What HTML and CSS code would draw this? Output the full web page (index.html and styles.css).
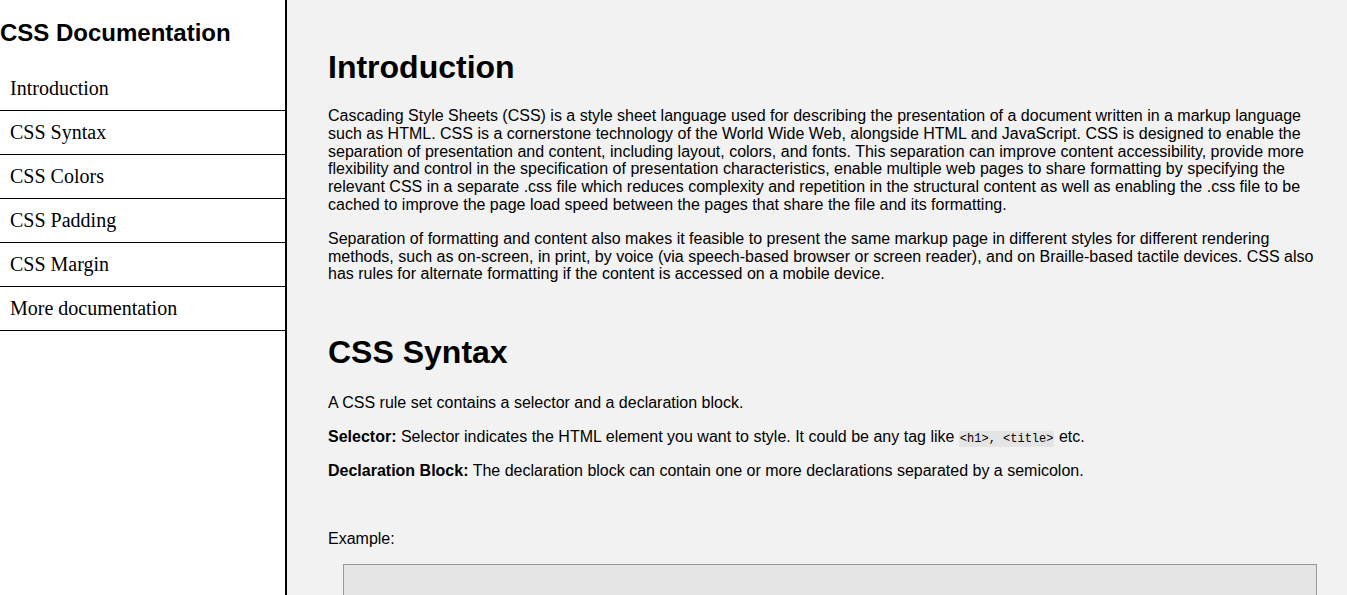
FILE: index.html
```html
<!DOCTYPE html>
<html lang="en">
<head>
<meta charset="utf-8">
<title>CSS Documentation</title>
<link rel="stylesheet" href="styles.css">
</head>
<body>
<div class="page">
  <nav class="navbar" id="navbar">
    <header class="nav-title">CSS Documentation</header>
    <ul class="nav-list">
      <li><a class="nav-link" href="#Introduction">Introduction</a></li>
      <li><a class="nav-link" href="#CSS_Syntax">CSS Syntax</a></li>
      <li><a class="nav-link" href="#CSS_Colors">CSS Colors</a></li>
      <li><a class="nav-link" href="#CSS_Padding">CSS Padding</a></li>
      <li><a class="nav-link" href="#CSS_Margin">CSS Margin</a></li>
      <li><a class="nav-link" href="#More_documentation">More documentation</a></li>
    </ul>
  </nav>
  <main class="main-doc" id="main-doc">
    <section class="main-section" id="Introduction">
      <header class="section-title">Introduction</header>
      <p class="text">Cascading Style Sheets (CSS) is a style sheet language used for describing the presentation of a document written in a markup language such as HTML. CSS is a cornerstone technology of the World Wide Web, alongside HTML and JavaScript. CSS is designed to enable the separation of presentation and content, including layout, colors, and fonts. This separation can improve content accessibility, provide more flexibility and control in the specification of presentation characteristics, enable multiple web pages to share formatting by specifying the relevant CSS in a separate .css file which reduces complexity and repetition in the structural content as well as enabling the .css file to be cached to improve the page load speed between the pages that share the file and its formatting.</p>
      <p class="text">Separation of formatting and content also makes it feasible to present the same markup page in different styles for different rendering methods, such as on-screen, in print, by voice (via speech-based browser or screen reader), and on Braille-based tactile devices. CSS also has rules for alternate formatting if the content is accessed on a mobile device.</p>
    </section>
    <section class="main-section" id="CSS_Syntax">
      <header class="section-title">CSS Syntax</header>
      <p class="text">A CSS rule set contains a selector and a declaration block.</p>
      <p class="text"><strong>Selector:</strong> Selector indicates the HTML element you want to style. It could be any tag like <code class="inline-code">&lt;h1&gt;, &lt;title&gt;</code> etc.</p>
      <p class="text"><strong>Declaration Block:</strong> The declaration block can contain one or more declarations separated by a semicolon.</p>
      <p class="text example-label">Example:</p>
      <div class="code-box"></div>
    </section>
  </main>
</div>
</body>
</html>
```

FILE: styles.css
```css
html, body {
  margin: 0;
  padding: 0;
  height: 100%;
  overflow: hidden;
}

.page {
  display: flex;
  height: 595px;
  background: #f2f2f2;
}

.navbar {
  width: 285px;
  flex: none;
  background: #ffffff;
  border-right: 2px solid #000;
  height: 100%;
}

.nav-title {
  font-family: "Liberation Sans", Arial, sans-serif;
  font-weight: bold;
  font-size: 24px;
  line-height: 28px;
  margin: 19px 0 20px 0;
  color: #000;
}

.nav-list {
  list-style: none;
  margin: 0;
  padding: 0;
}

.nav-list li {
  border-bottom: 1px solid #000;
}

.nav-link {
  display: block;
  padding: 10px 10px;
  font-family: "Liberation Serif", "Times New Roman", serif;
  font-size: 20px;
  line-height: 23px;
  color: #000;
  text-decoration: none;
}

.main-doc {
  flex: 1;
  padding: 0 30px 0 41px;
  font-family: "Liberation Sans", Arial, sans-serif;
  font-size: 16px;
  color: #000;
  overflow: hidden;
}

.main-section {
  margin-top: 49px;
}

.main-section + .main-section {
  margin-top: 51px;
}

.section-title {
  display: block;
  font-size: 32px;
  font-weight: bold;
  line-height: 37px;
  margin: 0 0 21px 0;
}

.main-section + .main-section .section-title {
  margin-bottom: 23px;
}

.text {
  margin: 0 0 16px 0;
  line-height: 17.8px;
}

.inline-code {
  font-family: "Liberation Mono", "DejaVu Sans Mono", monospace;
  font-size: 12px;
  line-height: 1;
  background: #e4e4e4;
  padding: 1px 1px;
}

.example-label {
  margin-top: 50px;
  margin-bottom: 17px;
}

.code-box {
  margin-left: 15px;
  height: 120px;
  background: #e5e5e5;
  border: 1px solid #999;
}
```
